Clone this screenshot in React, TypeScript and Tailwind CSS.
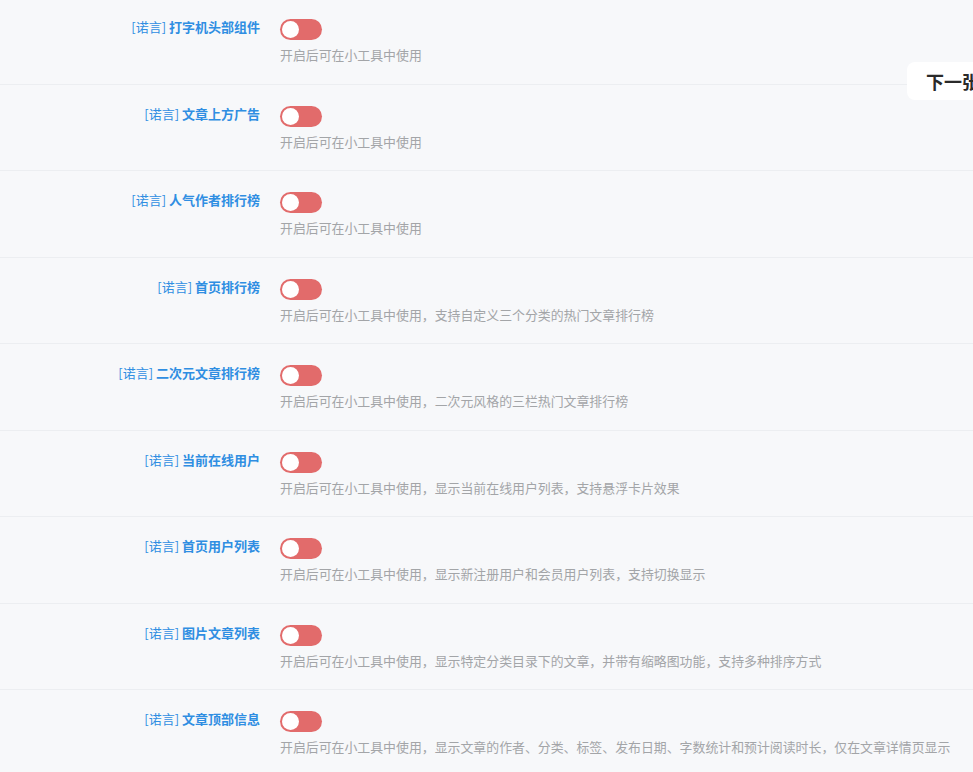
import React, { useState } from 'react';

interface Widget {
  id: string;
  name: string;
  desc: string;
}

const WIDGETS: Widget[] = [
  { id: 'typing', name: '打字机头部组件', desc: '开启后可在小工具中使用' },
  { id: 'ad', name: '文章上方广告', desc: '开启后可在小工具中使用' },
  { id: 'authors', name: '人气作者排行榜', desc: '开启后可在小工具中使用' },
  { id: 'rank', name: '首页排行榜', desc: '开启后可在小工具中使用，支持自定义三个分类的热门文章排行榜' },
  { id: 'acg', name: '二次元文章排行榜', desc: '开启后可在小工具中使用，二次元风格的三栏热门文章排行榜' },
  { id: 'online', name: '当前在线用户', desc: '开启后可在小工具中使用，显示当前在线用户列表，支持悬浮卡片效果' },
  { id: 'users', name: '首页用户列表', desc: '开启后可在小工具中使用，显示新注册用户和会员用户列表，支持切换显示' },
  { id: 'images', name: '图片文章列表', desc: '开启后可在小工具中使用，显示特定分类目录下的文章，并带有缩略图功能，支持多种排序方式' },
  { id: 'meta', name: '文章顶部信息', desc: '开启后可在小工具中使用，显示文章的作者、分类、标签、发布日期、字数统计和预计阅读时长，仅在文章详情页显示' },
];

const Toggle: React.FC<{ on: boolean; onChange: () => void; label: string }> = ({ on, onChange, label }) => (
  <button
    type="button"
    onClick={onChange}
    aria-label={label}
    className={`relative flex h-[21px] w-[42px] shrink-0 items-center rounded-full bg-[#e26b6b] px-[2px] ${on ? 'justify-end' : 'justify-start'}`}
  >
    <span className="h-[17px] w-[17px] rounded-full bg-white" />
  </button>
);

export default function App() {
  const [enabled, setEnabled] = useState<Record<string, boolean>>({});

  return (
    <div
      className="relative h-[772px] w-full overflow-hidden bg-[#f7f8fa]"
      style={{ fontFamily: '"Noto Sans CJK SC", "Noto Sans", sans-serif' }}
    >
      <div className="mt-[-2px] flex flex-col">
        {WIDGETS.map((w) => (
          <div key={w.id} className="flex h-[86.5px] shrink-0 gap-[20px] border-b border-[#eceef1] pt-[21px]">
            <div className="w-[260px] shrink-0 pt-[1px] text-right text-[13px] leading-[14px] text-[#2f8ee2]">
              <span className="font-normal">[诺言]</span> <span className="font-bold">{w.name}</span>
            </div>
            <div className="flex flex-col items-start">
              <Toggle
                on={!!enabled[w.id]}
                onChange={() => setEnabled({ ...enabled, [w.id]: !enabled[w.id] })}
                label={w.name}
              />
              <p className="mt-[7px] whitespace-nowrap text-[12.9px] leading-[16px] text-[#a3a5a8]">{w.desc}</p>
            </div>
          </div>
        ))}
      </div>

      <button className="absolute left-[907px] top-[62px] flex h-[38px] items-center whitespace-nowrap rounded-lg bg-white px-[19px] text-[18px] font-bold text-[#2a2a2a]">
        下一张
      </button>
    </div>
  );
}
